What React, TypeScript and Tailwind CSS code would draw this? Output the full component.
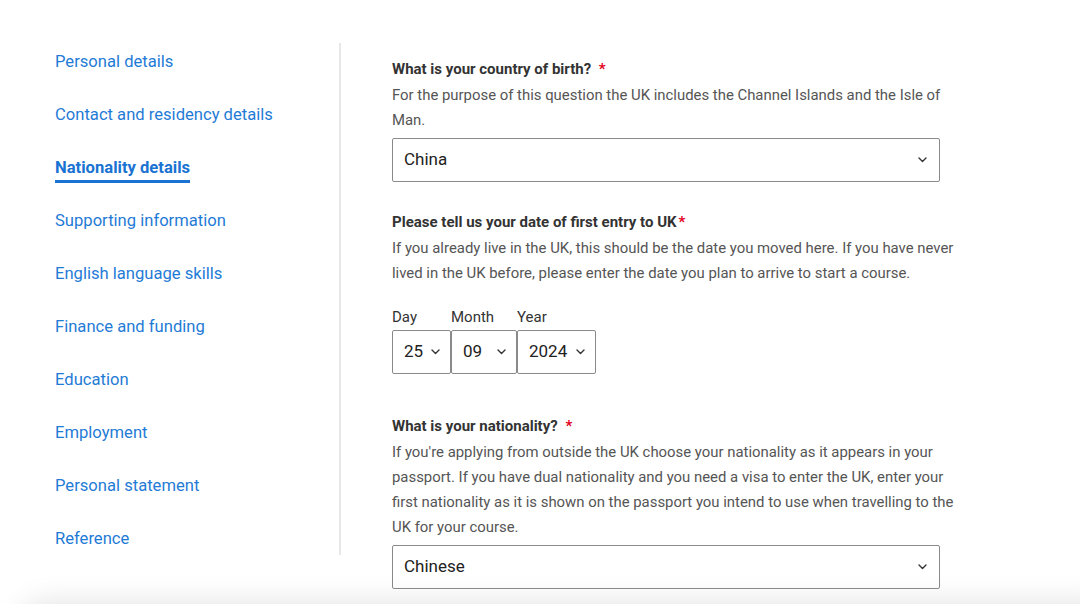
import React from "react";

const Chevron = () => (
  <svg width="9" height="6" viewBox="0 0 9 6" fill="none">
    <path d="M1 1l3.5 3.5L8 1" stroke="#333" strokeWidth="1.4" strokeLinecap="round" strokeLinejoin="round" />
  </svg>
);

const navItems = [
  "Personal details",
  "Contact and residency details",
  "Nationality details",
  "Supporting information",
  "English language skills",
  "Finance and funding",
  "Education",
  "Employment",
  "Personal statement",
  "Reference",
];

const Select = ({ value }: { value: string }) => (
  <div className="mt-[5px] flex h-[44px] w-[548px] items-center justify-between rounded-[2px] border border-[#8a8a8a] pl-[11px] pr-[12px] text-[17px] text-[#222]">
    <span>{value}</span>
    <Chevron />
  </div>
);

const SmallSelect = ({ value, w }: { value: string; w: string }) => (
  <div className={`flex h-[44px] items-center justify-between rounded-[2px] border border-[#8a8a8a] pl-[11px] pr-[10px] text-[17px] text-[#222] ${w}`}>
    <span>{value}</span>
    <Chevron />
  </div>
);

export default function App() {
  return (
    <div
      className="relative h-[604px] w-[1080px] overflow-hidden bg-white"
      style={{ fontFamily: "Roboto, 'Liberation Sans', sans-serif" }}
    >
      <div className="flex pt-[43px]">
        <nav className="w-[339px] shrink-0 pl-[55px] pt-[7px]">
          <ul className="flex flex-col gap-[29px]">
            {navItems.map((item) =>
              item === "Nationality details" ? (
                <li key={item} className="h-[24px] leading-[24px]">
                  <span className="inline-block border-b-[3px] border-[#1a73d2] text-[16.6px] font-bold text-[#1a73d2]">
                    {item}
                  </span>
                </li>
              ) : (
                <li key={item} className="h-[24px] text-[16.6px] leading-[24px] text-[#1f7bd6]">
                  {item}
                </li>
              )
            )}
          </ul>
        </nav>
        <div className="h-[512px] w-[2px] shrink-0 bg-[#e8e8e8]" />
        <main className="pl-[51px] pt-[14px] text-[14.9px] text-[#555]">
          <section>
            <div className="text-[15px] font-bold leading-[25px] text-[#333]">
              What is your country of birth? <span className="ml-[4px] text-[#e3001b]">*</span>
            </div>
            <p className="mt-[1px] w-[570px] leading-[25px]">
              For the purpose of this question the UK includes the Channel Islands and the Isle of Man.
            </p>
            <Select value="China" />
          </section>

          <section className="mt-[28px]">
            <div className="text-[15px] font-bold leading-[25px] text-[#333]">
              Please tell us your date of first entry to UK<span className="ml-[2px] text-[#e3001b]">*</span>
            </div>
            <p className="mt-[1px] w-[570px] leading-[25px]">
              If you already live in the UK, this should be the date you moved here. If you have never lived in the UK before, please enter the date you plan to arrive to start a course.
            </p>
            <div className="mt-[21px] flex">
              <div className="flex flex-col">
                <span className="h-[20px] text-[15px] leading-[20px] text-[#333]">Day</span>
                <div className="mt-[3px]">
                  <SmallSelect value="25" w="w-[59px]" />
                </div>
              </div>
              <div className="flex flex-col">
                <span className="h-[20px] text-[15px] leading-[20px] text-[#333]">Month</span>
                <div className="mt-[3px]">
                  <SmallSelect value="09" w="w-[66px]" />
                </div>
              </div>
              <div className="flex flex-col">
                <span className="h-[20px] text-[15px] leading-[20px] text-[#333]">Year</span>
                <div className="mt-[3px]">
                  <SmallSelect value="2024" w="w-[79px]" />
                </div>
              </div>
            </div>
          </section>

          <section className="mt-[40px]">
            <div className="text-[15px] font-bold leading-[25px] text-[#333]">
              What is your nationality? <span className="ml-[4px] text-[#e3001b]">*</span>
            </div>
            <p className="mt-[1px] w-[570px] leading-[25px]">
              If you're applying from outside the UK choose your nationality as it appears in your passport. If you have dual nationality and you need a visa to enter the UK, enter your first nationality as it is shown on the passport you intend to use when travelling to the UK for your course.
            </p>
            <div className="mt-[2px]">
              <Select value="Chinese" />
            </div>
          </section>
        </main>
      </div>
      <div className="pointer-events-none absolute left-[20px] right-[-40px] top-[606px] h-[60px] rounded-[40px] shadow-[0_0_28px_6px_rgba(0,0,0,0.10)]" />
    </div>
  );
}
